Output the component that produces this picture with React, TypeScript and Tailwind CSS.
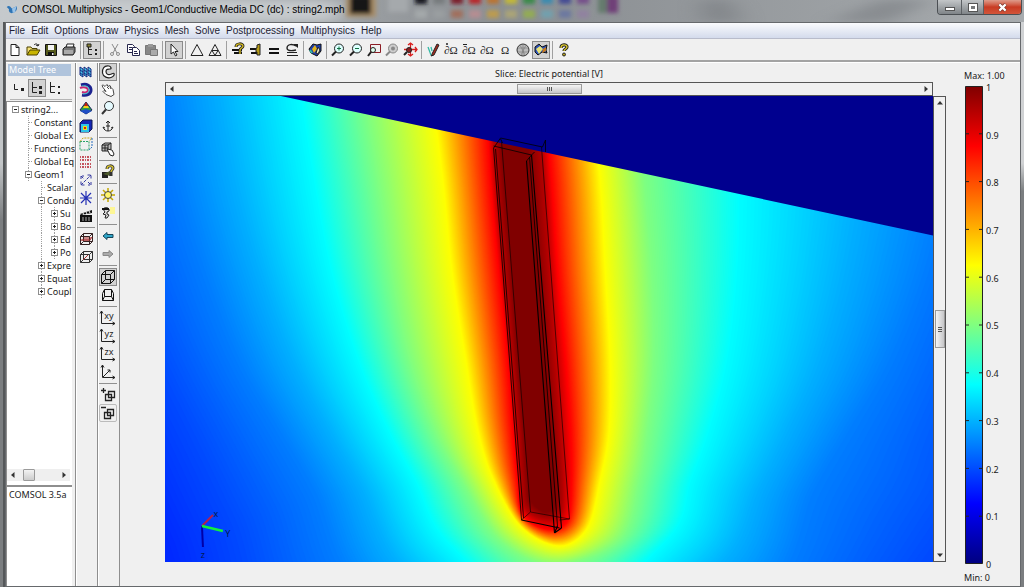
import React, { useState } from 'react';

type Point = [number, number];

const icons: Record<string, React.ReactNode> = {
  new: <path d="M4 2.500h5l3 3v8H4zM9 2.500v3h3" fill="#fff" stroke="#222" />,
  open: (
    <>
      <path d="M2 13V5h4l1 1.500h5V9" fill="#f6e27a" stroke="#4a4100" />
      <path d="M2 13l3-5h10l-3 5z" fill="#c8b400" stroke="#4a4100" />
      <path d="M9 3c2-2 4-1 4 1m-2-1l2 1 1-2" fill="none" stroke="#222" />
    </>
  ),
  save: (
    <>
      <path d="M2.500 2.500h11v11h-11z" fill="#555a1c" stroke="#111" />
      <path d="M5 3h6v5H5z" fill="#f4f4f4" />
      <path d="M5 10h6v3.500H5z" fill="#111" />
      <path d="M9 11h1.500v2H9z" fill="#eee" />
    </>
  ),
  print: (
    <>
      <path d="M5 6l1-4h7l-1 4" fill="#fff" stroke="#222" />
      <path d="M2 7l2-2h10v5l-2 3H2z" fill="#777" stroke="#222" />
      <path d="M3 9h9M3 11h9" stroke="#ddd" />
    </>
  ),
  tree: (
    <>
      <path d="M4.500 3v9.500M4.500 7.500H8M4.500 12.500H8" fill="none" stroke="#222" />
      <path d="M3 2h4v3H3z" fill="#8a8430" stroke="#222" />
      <path d="M11 7h2v2h-2zM11 11h2v2h-2z" fill="#222" />
    </>
  ),
  cut: (
    <g fill="none" stroke="#8b8b8b">
      <path d="M5 2l5 9M11 2L6 11" />
      <circle cx="5" cy="12" r="1.500" />
      <circle cx="11" cy="12" r="1.500" />
    </g>
  ),
  copy: (
    <g fill="#fff" stroke="#26264d">
      <path d="M2.500 2.500h5l2 2v6h-7z" />
      <path d="M7.500 5.500h4l3 3v5h-7z" />
      <path d="M4 5.500h3M4 7.500h3M9 9.500h3M9 11.500h4" />
    </g>
  ),
  paste: (
    <>
      <path d="M2.500 3.500h10v9h-10z" fill="#888" stroke="#777" />
      <path d="M5 2h5v3H5z" fill="#999" />
      <path d="M7.500 7.500h7v6h-7z" fill="#aaa" stroke="#777" />
    </>
  ),
  pointer: <path d="M5 2v10l2.500-2 2 4 1.500-1-2-3.500h3z" fill="#fff" stroke="#222" />,
  mesh: <path d="M8 2.500L14 13.500H2z" fill="none" stroke="#222" />,
  refine: <path d="M8 2.500L14 13.500H2zM5 8.500h6l-3 5z" fill="none" stroke="#222" />,
  solveParams: (
    <>
      <path d="M2 8h10M4 11h8" stroke="#111" strokeWidth="2" />
      <path d="M6 5c0-4 7-4 7-1 0 2-3 2-3 4v4" fill="none" stroke="#222" strokeWidth="3" />
      <path d="M6 5c0-4 7-4 7-1 0 2-3 2-3 4v4" fill="none" stroke="#d8bd1e" strokeWidth="1.300" />
    </>
  ),
  solveManager: (
    <>
      <path d="M2 7h9M3 11h9" stroke="#111" strokeWidth="2" />
      <path d="M9 3l3-1v11H9v-3H8V6h1z" fill="#b59b17" stroke="#222" />
    </>
  ),
  solve: <path d="M3 7h10M3 11h10" stroke="#111" strokeWidth="2" />,
  restart: (
    <>
      <path d="M12 4c-5-3-9-1-9 2s4 3 9 2" fill="none" stroke="#222" strokeWidth="1.300" />
      <path d="M9 2h5v4zM3 10h10v1H3zM3 13h11v1H3z" fill="#222" />
    </>
  ),
  palette: (
    <>
      <path d="M2 7l4-5 4 1 4-1v7l-4 5-6-3z" fill="#1f3ea8" stroke="#111" />
      <path d="M5 7l3-4 2 4-3 4z" fill="#e3b51a" />
      <path d="M9 11l2-6 2 3-2 4z" fill="#e9e9c8" stroke="#222" />
      <path d="M3 8l2 3" stroke="#33b8a3" strokeWidth="2" />
    </>
  ),
  zoomIn: (
    <>
      <circle cx="9" cy="6.500" r="4.500" fill="#dff" stroke="#222" />
      <path d="M7 6.500h4M9 4.500v4" stroke="#107040" />
      <path d="M6 9.500L2 13.500" stroke="#222" strokeWidth="2" />
    </>
  ),
  zoomOut: (
    <>
      <circle cx="9" cy="6.500" r="4.500" fill="#dff" stroke="#222" />
      <path d="M7 6.500h4" stroke="#107040" />
      <path d="M6 9.500L2 13.500" stroke="#222" strokeWidth="2" />
    </>
  ),
  zoomWindow: (
    <>
      <path d="M4.500 2.500h10v8h-10z" fill="none" stroke="#8c1d24" />
      <circle cx="7" cy="8" r="2.500" fill="#dfe" stroke="#222" />
      <path d="M5 10l-3 4" stroke="#222" strokeWidth="2" />
    </>
  ),
  zoomSelected: (
    <>
      <circle cx="9" cy="6.500" r="4.500" fill="#ccc" stroke="#888" />
      <circle cx="9" cy="6.500" r="2" fill="#888" />
      <path d="M6 9.500L2 13.500" stroke="#888" strokeWidth="2" />
    </>
  ),
  zoomExtents: (
    <>
      <path d="M8.500 1v13M2 7.500h13M6 3l2.500-2L11 3M13 5l2 2.500-2 2.500M6 12l2.500 2 2.500-2" fill="none" stroke="#d81c1c" strokeWidth="1.300" />
      <circle cx="7" cy="8" r="2.500" fill="#822" stroke="#222" />
      <path d="M5 10l-3 3" stroke="#222" strokeWidth="2" />
    </>
  ),
  drawMode: (
    <>
      <path d="M7 12L12 2l2 1-5 10-3 1z" fill="#a82a1c" stroke="#222" />
      <path d="M3 5l3 8M6 5l1 4" stroke="#35b9a5" strokeWidth="1.300" />
    </>
  ),
  sphere: (
    <>
      <circle cx="8" cy="8" r="6" fill="#bbb" stroke="#333" />
      <path d="M3 6h10M3 10h10M5 3l5 10M11 3L6 13M8 2v12" stroke="#777" strokeWidth=".6" />
    </>
  ),
  post: (
    <>
      <path d="M2 5l4-3 3 3 5-2-1 5 1 3-5-1-4 3-3-3z" fill="#2d54bd" stroke="#111" />
      <path d="M3 7l4-3 3 3-4 5z" fill="#e7e37a" />
      <path d="M9 11l1-4 3-2v4z" fill="#c7791e" />
    </>
  ),
  help: (
    <>
      <path d="M5 6c0-4 6-4 6-1 0 2-3 2-3 4" fill="none" stroke="#222" strokeWidth="3.200" />
      <path d="M5 6c0-4 6-4 6-1 0 2-3 2-3 4" fill="none" stroke="#d9c52c" strokeWidth="1.400" />
      <circle cx="8" cy="12.500" r="1.500" fill="#b39d17" stroke="#222" />
    </>
  ),
  slice: (
    <g stroke="#14277f" fill="#48c9e8">
      <path d="M2 3l3 2v8l-3-2zM6 3l3 2v8l-3-2zM10 3l3 2v8l-3-2z" />
      <path d="M2 6l3 2M6 6l3 2M10 6l3 2M2 9l3 2M6 9l3 2M10 9l3 2" />
    </g>
  ),
  isosurface: (
    <g fill="none">
      <path d="M3 3c6-2 10 1 10 5s-4 6-9 5" stroke="#1c2390" strokeWidth="3" />
      <path d="M2 6c4-2 8 0 8 2s-3 3-6 2" stroke="#c72873" strokeWidth="2" />
      <path d="M4 4c4-1 7 1 7 4s-3 4-6 4" stroke="#2fc5d0" />
    </g>
  ),
  subdomain: (
    <>
      <path d="M8 2l6 8-6 4-6-4z" fill="#2ba046" stroke="#1b2160" />
      <path d="M8 2l2 4H6z" fill="#c9190f" />
      <path d="M6 6h4l1 2H5z" fill="#f0cf19" />
      <path d="M2 11l6 3 6-3-6-2z" fill="#214fc7" />
    </>
  ),
  boundary: (
    <>
      <path d="M2 5l3-3h9v9l-3 3H2z" fill="#1526b5" stroke="#101650" />
      <path d="M3 6h8v8H3z" fill="#2fc4ea" />
      <path d="M5 8h4v4H5z" fill="#e2df22" />
      <path d="M6 9h2v2H6z" fill="#d4200f" />
    </>
  ),
  edge: (
    <g fill="none" strokeDasharray="2 1">
      <path d="M2 5.500h9v8.500H2z" stroke="#2aa36a" />
      <path d="M2 5.500L5 2h9l-3 3.500" stroke="#c9a51c" />
      <path d="M14 2v9l-3 3" stroke="#2a6fbf" />
    </g>
  ),
  arrows: (
    <path
      d="M2 3h12M2 6h12M2 10h12M2 13h12"
      fill="none"
      stroke="#b5202e"
      strokeWidth="1.500"
      strokeDasharray="1 1 2 1"
    />
  ),
  principal: (
    <path
      d="M3 13L13 3M9.500 3H13v3.500M3 9.500V13h3.500M3 4l3 3M10 10l3 3M13 10v3h-3M3 7V4h3"
      fill="none"
      stroke="#3438a0"
      strokeDasharray="3 1"
    />
  ),
  streamline: <path d="M8 1v14M2 8h12M3 3l10 10M13 3L3 13" stroke="#2430b4" strokeWidth="1.200" />,
  animate: (
    <>
      <path d="M2 7h12v7H2z" fill="#111" />
      <path d="M2 6l12-4v3L3 7z" fill="#111" />
      <path d="M5 5l1 2M8 4l1 2M11 3l1 2" stroke="#eee" />
      <path d="M4 10h8M4 12h8" stroke="#aaa" strokeDasharray="2 1" />
    </>
  ),
  geomRed: (
    <>
      <path d="M3 10l3-4h8l-2 4z" fill="#c88" />
      <path d="M2.500 5.500h9v8h-9zM2.500 5.500l3-3h9v8l-3 3M11.500 5.500l3-3M5.500 2.500v8h9M5.500 10.500l-3 3" fill="none" stroke="#342020" />
      <path d="M3 9h9l2-3" fill="none" stroke="#a33" />
    </>
  ),
  geomCut: (
    <>
      <path d="M2.500 5.500h9v8h-9zM2.500 5.500l3-3h9v8l-3 3M11.500 5.500l3-3M5.500 2.500v8h9M5.500 10.500l-3 3" fill="none" stroke="#333" />
      <path d="M5 11l5-5" stroke="#a33" />
    </>
  ),
  orbit: (
    <path
      d="M9 2C4 1 2 5 2.500 9S8 14.500 11 13.500s3.500-3 3-4-2 .5-4 1-4-.5-4-3S8 5 10 5s1-2.500-1-3z"
      fill="#fff"
      stroke="#222"
      strokeWidth="1.200"
    />
  ),
  pan: (
    <path
      d="M2 3.500c1-1 2 0 3 1l2-2 1 2 2-1 1 2 2 2 1 5-3 2-5-2-3-3 1-1 2 1-3-4zM7 5l2 2M10 5l1 2"
      fill="#fff"
      stroke="#333"
      strokeWidth=".9"
    />
  ),
  dolly: (
    <>
      <circle cx="9" cy="6" r="4.500" fill="#e6fbff" stroke="#333" />
      <path d="M6 9.500l-4 4.500" stroke="#333" strokeWidth="2" />
    </>
  ),
  anchor: (
    <path d="M8 3v10M6 5l2-2 2 2M6 8h4M3 9c1 3 3 4 5 4s4-1 5-4l-2 1M3 9l2 1" fill="none" stroke="#222" />
  ),
  cubeHand: (
    <>
      <path d="M2 4l3-2h6v6l-3 2H2zM2 4h6v6M8 4l3-2M5 4v6M2 7h6" fill="#bbb" stroke="#222" />
      <path d="M7 8l5 1 2 4-1 2-3-1z" fill="#fff" stroke="#222" />
    </>
  ),
  cameraHelp: (
    <>
      <path d="M2 8h6v6H2z" fill="#222" />
      <path d="M3 10l7-3v5z" fill="#4d5a2c" />
      <path d="M7 5c0-4 6-4 6-1 0 2-2 2-2 4v4" fill="none" stroke="#333" strokeWidth="3" />
      <path d="M7 5c0-4 6-4 6-1 0 2-2 2-2 4" fill="none" stroke="#d9c52c" strokeWidth="1.300" />
    </>
  ),
  light: (
    <>
      <path d="M8 1v14M1 8h14M3 3l10 10M13 3L3 13" stroke="#c4a900" strokeWidth="1.500" />
      <circle cx="8" cy="8" r="3.500" fill="#fff56a" stroke="#444" />
    </>
  ),
  headlight: (
    <>
      <path d="M10 2h5v7h-5z" fill="#fdf695" />
      <path d="M3 4c3-3 7-1 6 2l-2 1v2l2 1-2 3H5l1-3-3-1 2-2z" fill="#ddd" stroke="#222" />
      <path d="M2 4h7" stroke="#111" strokeWidth="2" />
    </>
  ),
  back: <path d="M3 8l4-3.500V6.500h6v3H7v2z" fill="#2fa6c9" stroke="#174558" />,
  forward: <path d="M13 8L9 4.500V6.500H3v3h6v2z" fill="#aaa" stroke="#888" />,
  cube: (
    <path d="M1.500 5.500h9v9h-9zM1.500 5.500l4-4h9v9l-4 4M10.500 5.500l4-4M5.500 1.500v9h9M5.500 10.500l-4 4" fill="none" stroke="#111" />
  ),
  perspective: (
    <path d="M4.500 2.500h7v7h-7zM4.500 9.500l-2 4h11l-2-4M2.500 13.500v-7l2-4M13.500 13.500v-7l-2-4" fill="none" stroke="#111" />
  ),
  isoView: <path d="M2.500 1v12.500H15M1 3.500L2.500 1 4 3.500M12.500 12l2.500 1.500-2.500 1.500M3 13l7-7M7.500 6H10v2.500" fill="none" stroke="#222" />,
  addCopy: <path d="M1 3.500h5M3.500 1v5M5.500 7.500h6v6h-6zM8.500 4.500h6v6h-6z" fill="none" stroke="#222" strokeWidth="1.300" />,
  subCopy: <path d="M1 2.500h5M4.500 7.500h6v6h-6zM7.500 4.500h6v6h-6z" fill="none" stroke="#222" strokeWidth="1.300" />,
  levelOne: (
    <>
      <path d="M3.500 4v5.500H7" fill="none" stroke="#222" />
      <path d="M10 8h3v3h-3z" fill="#222" />
    </>
  ),
  levelTwo: (
    <>
      <path d="M3.500 2v10.500H8M3.500 7.500H8" fill="none" stroke="#222" />
      <path d="M10 6h3v3h-3zM10 11h3v3h-3z" fill="#222" />
    </>
  ),
  levelAll: (
    <>
      <path d="M3.500 2v10.500H8M3.500 6.500H8" fill="none" stroke="#222" />
      <path d="M11 6h2v2h-2zM11 12h2v2h-2z" fill="#222" />
    </>
  ),
};

const textIcon = (text: string) => (
  <text x="8" y="12" fontSize="11" textAnchor="middle" fill="#222" fontFamily="Liberation Serif, serif">
    {text}
  </text>
);

icons.pointMode = (
  <>
    {textIcon('∂Ω')}
    <circle cx="4" cy="2" r="1" fill="#222" />
  </>
);
icons.edgeMode = (
  <>
    {textIcon('∂Ω')}
    <path d="M2 2.500h4" stroke="#222" />
  </>
);
icons.boundaryMode = textIcon('∂Ω');
icons.subdomainMode = textIcon('Ω');

const planeIcon = (label: string) => (
  <>
    <path d="M1.500 1v12.500H15M0 3.500L1.500 1 3 3.500M12.500 12l2.500 1.500-2.500 1.500" fill="none" stroke="#222" />
    <text x="9" y="9" fontSize="9" textAnchor="middle" fill="#222" fontFamily="Noto Sans, sans-serif">
      {label}
    </text>
  </>
);

icons.xy = planeIcon('xy');
icons.yz = planeIcon('yz');
icons.zx = planeIcon('zx');

const menus = ['File', 'Edit', 'Options', 'Draw', 'Physics', 'Mesh', 'Solve', 'Postprocessing', 'Multiphysics', 'Help'];

const mainTools = [
  ['new', 'open', 'save', 'print'],
  ['tree'],
  ['cut', 'copy', 'paste'],
  ['pointer'],
  ['mesh', 'refine'],
  ['solveParams', 'solveManager', 'solve', 'restart'],
  ['palette'],
  ['zoomIn', 'zoomOut', 'zoomWindow', 'zoomSelected', 'zoomExtents'],
  ['drawMode', 'pointMode', 'edgeMode', 'boundaryMode', 'subdomainMode', 'sphere', 'post'],
  ['help'],
];

const plotTools = [
  ['slice', 'isosurface', 'subdomain', 'boundary', 'edge', 'arrows', 'principal', 'streamline', 'animate'],
  ['geomRed', 'geomCut'],
];

const cameraTools = [
  ['orbit', 'pan', 'dolly', 'anchor'],
  ['cubeHand'],
  ['cameraHelp'],
  ['light', 'headlight'],
  ['back', 'forward'],
  ['cube', 'perspective'],
  ['xy', 'yz', 'zx', 'isoView'],
  ['addCopy', 'subCopy'],
];

const pressed = ['tree', 'pointer', 'post', 'orbit', 'cube', 'levelTwo'];

const treeRows = [
  { level: 0, label: 'string2...', box: '-' },
  { level: 1, label: 'Constant', box: '' },
  { level: 1, label: 'Global Ex', box: '' },
  { level: 1, label: 'Functions', box: '' },
  { level: 1, label: 'Global Eq', box: '' },
  { level: 1, label: 'Geom1', box: '-' },
  { level: 2, label: 'Scalar', box: '' },
  { level: 2, label: 'Condu', box: '-' },
  { level: 3, label: 'Su', box: '+' },
  { level: 3, label: 'Bo', box: '+' },
  { level: 3, label: 'Ed', box: '+' },
  { level: 3, label: 'Po', box: '+' },
  { level: 2, label: 'Expre', box: '+' },
  { level: 2, label: 'Equat', box: '+' },
  { level: 2, label: 'Coupl', box: '+' },
];

// equipotential curves, from the outside in, all with the same stations
const contours: { v: number; points: Point[] }[] = [
  {
    v: 0.16,
    points: [[-60, 80], [0, 180], [30, 270], [70, 360], [110, 450], [150, 540], [230, 700], [555, 850], [900, 700], [1100, 540], [1120, 450], [1130, 360], [1150, 270], [1180, 180], [1200, 80]],
  },
  {
    v: 0.2,
    points: [[47, 80], [90, 180], [120, 270], [158, 360], [198, 441], [235, 518], [300, 655], [555, 780], [830, 650], [953, 518], [980, 441], [1003, 360], [1030, 270], [1055, 180], [1068, 80]],
  },
  {
    v: 0.25,
    points: [[158, 80], [178, 180], [205, 270], [240, 360], [280, 430], [315, 490], [370, 600], [555, 700], [760, 600], [815, 490], [850, 430], [890, 360], [925, 270], [945, 180], [950, 80]],
  },
  {
    v: 0.3,
    points: [[220, 80], [238, 180], [262, 270], [295, 360], [331, 430], [363, 486], [412, 575], [555, 662], [713, 570], [758, 486], [786, 430], [817, 360], [842, 270], [856, 180], [858, 80]],
  },
  {
    v: 0.375,
    points: [[298, 80], [314, 180], [331, 270], [358, 360], [388, 430], [415, 480], [450, 545], [555, 620], [668, 540], [692, 480], [710, 430], [728, 360], [738, 270], [740, 180], [735, 80]],
  },
  {
    v: 0.5,
    points: [[362, 80], [378, 180], [391, 270], [410, 360], [435, 430], [462, 480], [500, 540], [555, 565], [620, 540], [640, 480], [648, 430], [654, 360], [652, 270], [645, 180], [638, 80]],
  },
  {
    v: 0.625,
    points: [[430, 80], [443, 180], [452, 270], [466, 360], [478, 430], [494, 480], [522, 527], [560, 546], [588, 528], [601, 480], [610, 430], [611, 360], [606, 270], [601, 180], [590, 80]],
  },
  {
    v: 0.875,
    points: [[486, 80], [491, 180], [499, 270], [508, 360], [513, 430], [518, 480], [523, 514], [548, 529], [568, 520], [572, 480], [571, 430], [566, 360], [558, 270], [552, 180], [544, 80]],
  },
  {
    v: 0.95,
    points: [[491, 80], [497, 180], [505, 270], [513, 360], [519, 430], [522, 480], [526, 508], [546, 519], [561, 512], [563, 480], [560, 430], [555, 360], [549, 270], [544, 180], [537, 80]],
  },
  {
    v: 1,
    points: [[498, 80], [505, 180], [513, 270], [519, 360], [525, 430], [529, 480], [531, 500], [545, 512], [555, 505], [555, 480], [551, 430], [545, 360], [538, 270], [531, 180], [523, 80]],
  },
];

const clamp = (n: number) => Math.max(0, Math.min(1, n));

const jet = (v: number) => {
  const r = v > 0.875 ? 1 - (v - 0.875) * 4 : (v - 0.375) * 4;
  const g = v > 0.5 ? (0.875 - v) * 4 : (v - 0.125) * 4;
  const b = v < 0.125 ? 0.5 + v * 4 : (0.625 - v) * 4;
  return `rgb(${[r, g, b].map((c) => Math.round(clamp(c) * 255)).join(',')})`;
};

const contourAt = (v: number): Point[] => {
  const i = Math.max(1, contours.findIndex((c) => c.v >= v));
  const a = contours[i - 1];
  const b = contours[i];
  const t = (v - a.v) / (b.v - a.v);
  return a.points.map(([x, y], k) => [x + (b.points[k][0] - x) * t, y + (b.points[k][1] - y) * t]);
};

const smoothPath = (p: Point[]) => {
  let d = `M${p[0][0]} ${p[0][1]}`;
  for (let i = 0; i < p.length - 1; i++) {
    const before = p[Math.max(0, i - 1)];
    const after = p[Math.min(p.length - 1, i + 2)];
    const c1 = [p[i][0] + (p[i + 1][0] - before[0]) / 6, p[i][1] + (p[i + 1][1] - before[1]) / 6];
    const c2 = [p[i + 1][0] - (after[0] - p[i][0]) / 6, p[i + 1][1] - (after[1] - p[i][1]) / 6];
    d += `C${c1.map((n) => n.toFixed(1))} ${c2.map((n) => n.toFixed(1))} ${p[i + 1].map((n) => n.toFixed(1))}`;
  }
  return d + 'Z';
};

const levels = Array.from({ length: 335 }, (_, i) => 0.165 + i * 0.0025);

const ToolButton = ({ name }: { name: string }) => (
  <button
    aria-label={name}
    className={`w-[18px] h-[18px] shrink-0 flex items-center justify-center ${
      pressed.includes(name)
        ? 'bg-[#d2d2d2] border border-[#8a8a8a]'
        : name === 'subCopy'
        ? 'border border-[#bbbbbb] rounded-[2px]'
        : ''
    }`}
  >
    <svg viewBox="0 0 16 16" className="w-4 h-4 shrink-0 overflow-visible">
      {icons[name]}
    </svg>
  </button>
);

const SideBar = ({ groups }: { groups: string[][] }) => (
  <div className="w-[22px] shrink-0 flex flex-col items-center pr-[2px] border-l border-[#8e8e8e] shadow-[inset_1px_0_0_#ffffff]">
    {groups.map((group, i) => (
      <React.Fragment key={i}>
        {i > 0 && <div className="w-[18px] h-px my-[2px] bg-[#909090]" />}
        {group.map((name) => (
          <ToolButton key={name} name={name} />
        ))}
      </React.Fragment>
    ))}
  </div>
);

const Arrow = ({ d, label }: { d: string; label: string }) => (
  <button aria-label={label} className="w-3 h-3 shrink-0 flex items-center justify-center">
    <svg viewBox="0 0 6 6" className="w-[6px] h-[6px]">
      <path d={d} fill="#333" />
    </svg>
  </button>
);

const LEFT = 'M4.500 0v6L1 3z';
const RIGHT = 'M1.500 0v6L5 3z';
const UP = 'M0 4.500h6L3 1z';
const DOWN = 'M0 1.500h6L3 5z';

const TitleBar = () => (
  <header className="relative h-[22px] shrink-0 flex items-start justify-between overflow-hidden bg-linear-to-r from-[#c4c8cb] via-[#898d91] to-[#a7abae]">
    <svg className="absolute inset-0 h-[22px] w-full" viewBox="0 0 1024 22" preserveAspectRatio="xMinYMin slice">
      <defs>
        <filter id="glass">
          <feGaussianBlur stdDeviation="2" />
        </filter>
        <filter id="glow" x="-10%" width="120%" y="-50%" height="200%">
          <feGaussianBlur stdDeviation="12 4" />
        </filter>
      </defs>
      <path d="M0 0h340v22H0z" fill="#c6cacd" filter="url(#glow)" />
      <path d="M700 0h30l12 22h-40zM880 0h50l-40 22h-60z" fill="#73777b" opacity=".5" filter="url(#glow)" />
      <g filter="url(#glass)">
        <path d="M346 -4h30v21h-30z" fill="#a88d68" />
        <path d="M350 -4h21v18h-21z" fill="#191715" />
        <path d="M388 -4h20v16h-20z" fill="#a5a9ac" />
        {['#16181a', '#777b7e', '#7b1d2c', '#b8252c', '#ba7431', '#c2b839', '#3b8a4a', '#3c8bb0', '#454c94', '#76508a'].map((c, i) => (
          <rect key={c} x={415 + i * 18} y="-6" width="12" height="10" fill={c} />
        ))}
        {['#a4a9aa', '#9a9ea0', '#a1705d', '#b58d92', '#bd9b4d', '#aaa477', '#93ac52', '#72a0ae', '#6c78a0', '#9182a0'].map((c, i) => (
          <rect key={c} x={415 + i * 18} y="10" width="12" height="8" fill={c} />
        ))}
        <path d="M598 -4h10v17h-10z" fill="#657c6d" />
        <path d="M607 -4h11v17h-11z" fill="#704078" />
      </g>
    </svg>
    <div className="relative flex items-center gap-1 pl-1.5 h-5">
      <svg viewBox="0 0 16 16" className="w-3 h-3">
        <path d="M1 4c3-3 5 0 7 2l6-3c2 4-1 8-5 9-3 1-6-2-5-5z" fill="#2e74b5" />
        <path d="M8 6l6-3-2 8-3 1z" fill="#9cc4e8" />
      </svg>
      <h1 className="text-[10px] leading-4 text-black whitespace-nowrap font-['Liberation_Sans',sans-serif]">
        COMSOL Multiphysics - Geom1/Conductive Media DC (dc) : string2.mph
      </h1>
    </div>
    <div className="relative flex h-[15px] mr-[2px] rounded-b border border-t-0 border-[#4b4f53] overflow-hidden">
      <button aria-label="Minimize" className="w-6 flex items-center justify-center bg-linear-to-b from-[#c3c6c8] to-[#7f8488] border-r border-[#5c6064]">
        <span className="w-[10px] h-1 mt-1 bg-white border border-[#555555]" />
      </button>
      <button aria-label="Maximize" className="w-[22px] flex items-center justify-center bg-linear-to-b from-[#c3c6c8] to-[#7f8488] border-r border-[#5c6064]">
        <span className="w-2 h-[7px] bg-[#77797b] border-2 border-white outline outline-[#555555]" />
      </button>
      <button aria-label="Close" className="w-[37px] flex items-center justify-center bg-linear-to-b from-[#dd9b8b] via-[#c83a22] to-[#d2553a]">
        <svg viewBox="0 0 10 10" className="w-[9px] h-[9px]">
          <path d="M1.500 1.500l7 7M8.500 1.500l-7 7" stroke="#6b2a20" strokeWidth="4" />
          <path d="M1.500 1.500l7 7M8.500 1.500l-7 7" stroke="#fff" strokeWidth="2.500" />
        </svg>
      </button>
    </div>
  </header>
);

const ModelTree = () => {
  const [selected, setSelected] = useState('');
  return (
    <aside className="w-[69px] shrink-0 flex flex-col bg-[#f0f0f0] pr-[3px] text-[9px]">
      <h2 className="mt-px ml-[2px] h-3 pl-px mr-px bg-[#b0c4dc] text-white text-[9px] leading-3 whitespace-nowrap">
        Model Tree
      </h2>
      <div className="flex items-center h-6 ml-1 border-b border-[#b5b5b5]">
        <ToolButton name="levelOne" />
        <ToolButton name="levelTwo" />
        <ToolButton name="levelAll" />
      </div>
      <div className="mt-px flex-1 min-h-0 flex flex-col bg-white border-t border-l border-[#8e8e8e]">
        <ul className="flex-1 min-h-0 pt-px pl-[5px]">
          {treeRows.map((row) => (
            <li key={row.label} className="flex h-[13px]">
              {Array.from({ length: row.level }, (_, i) => (
                <span key={i} className="w-[13px] shrink-0 flex justify-center pr-[6px]">
                  {row.level === 3 && i === 2 && <span className="border-l border-dotted border-[#a0a0a0]" />}
                </span>
              ))}
              <span className="w-[7px] shrink-0">
                <svg viewBox="0 0 7 13" className="w-[7px] h-[13px]" fill="none" shapeRendering="crispEdges">
                  {row.level > 0 && <path d="M3.500 0v13" stroke="#a0a0a0" strokeDasharray="1 1" />}
                  {row.box ? (
                    <>
                      <path d="M.5 3.500h6v6h-6z" fill="#fff" stroke="#8e8e8e" />
                      <path d={row.box === '+' ? 'M2 6.500h3M3.500 5v3' : 'M2 6.500h3'} stroke="#222" />
                    </>
                  ) : (
                    <path d="M3.500 6.500H7" stroke="#a0a0a0" strokeDasharray="1 1" />
                  )}
                </svg>
              </span>
              <button
                onClick={() => setSelected(row.label)}
                className={`pl-[2px] leading-[13px] whitespace-nowrap text-left ${
                  selected === row.label ? 'bg-[#cfe0f5]' : ''
                }`}
              >
                {row.label}
              </button>
            </li>
          ))}
        </ul>
        <div className="flex items-center justify-between h-3 mb-1 mr-[2px] bg-[#efefef]">
          <Arrow d={LEFT} label="Scroll tree left" />
          <div className="flex-1 flex items-center pl-1">
            <div className="w-3 h-3 border border-[#9a9a9a] rounded-[1px] bg-linear-to-b from-[#f3f3f3] to-[#cccccc]" />
          </div>
          <Arrow d={RIGHT} label="Scroll tree right" />
        </div>
      </div>
      <div className="h-[101px] shrink-0 pl-[2px] border-t-2 border-l border-[#8e8e8e] bg-white">
        <p className="leading-[15px] whitespace-nowrap">COMSOL 3.5a</p>
      </div>
    </aside>
  );
};

const SlicePlot = () => (
  <svg
    viewBox="165 96 769 466"
    preserveAspectRatio="none"
    className="absolute inset-0 w-full h-full"
    role="img"
    aria-label="Slice plot of the electric potential"
  >
    <path d="M165 96h769v466H165z" fill={jet(0.165)} />
    {levels.map((v) => (
      <path key={v} d={smoothPath(contourAt(Math.min(v, 1)))} fill={jet(Math.min(v, 1))} />
    ))}
    <path d="M281 96L934 235.500V96z" fill="#00008f" />
    <g fill="none" stroke="#000" strokeWidth=".8">
      <path d="M494 148L501 138L543 147L546 140V152M501 139L503 143M494 146L532 155L527 161M532 155L535 152" />
      <path d="M494 148L522 520M496 149L524 518" />
      <path d="M502 142L531 512M542 147L570 519" strokeWidth=".6" />
      <path d="M527 161L555 533M532 155L562 528" strokeWidth="1.100" />
      <path d="M530 157L558 526" />
      <path d="M522 520L560 528M555 533L562 528M555 533L558 526" strokeWidth="1.200" />
      <path d="M522 520L531 512L570 519L560 520" strokeWidth=".6" />
    </g>
    <g fill="none" strokeWidth="2">
      <path d="M202 526L213 515" stroke="#b3204e" />
      <path d="M202 526L203 547" stroke="#0000a8" />
      <path d="M202 526L223 531" stroke="#12f03c" strokeWidth="2.500" />
    </g>
    <g fontSize="9" fill="#001a55" textAnchor="middle" fontFamily="Noto Sans, sans-serif">
      <text x="216" y="517">x</text>
      <text x="228" y="537">Y</text>
      <text x="203" y="558">z</text>
    </g>
  </svg>
);

const ticks = ['1', '0.9', '0.8', '0.7', '0.6', '0.5', '0.4', '0.3', '0.2', '0.1', '0'];

const ColorBar = () => (
  <div className="w-14 shrink-0 flex flex-col pt-2 text-[9px]">
    <p className="h-[15px] leading-[10px] whitespace-nowrap">Max: 1.00</p>
    <div className="flex-1 min-h-0 flex gap-[3px]">
      <svg viewBox="0 0 18 478" preserveAspectRatio="none" className="w-[18px] h-full ml-px">
        <defs>
          <linearGradient id="jet" x1="0" y1="0" x2="0" y2="1">
            {[1, 0.875, 0.625, 0.5, 0.375, 0.125, 0].map((v) => (
              <stop key={v} offset={1 - v} stopColor={jet(v)} />
            ))}
          </linearGradient>
        </defs>
        <path d="M.5 .5h17v477H.5z" fill="url(#jet)" stroke="#222" />
        {ticks.slice(1, -1).map((t, i) => (
          <path key={t} d={`M1 ${(i + 1) * 47.8}h3M14 ${(i + 1) * 47.8}h3`} stroke="#222" />
        ))}
      </svg>
      <ol className="flex flex-col justify-between -mt-[3px] -mb-[6px] leading-[10px]">
        {ticks.map((t) => (
          <li key={t}>{t}</li>
        ))}
      </ol>
    </div>
    <p className="h-[22px] pt-[9px] leading-[10px]">Min: 0</p>
  </div>
);

const App = () => {
  return (
    <div className="h-screen w-full flex flex-col overflow-hidden bg-[#7f8386] text-[#1a1a1a] font-['Noto_Sans','Open_Sans',sans-serif]">
      <TitleBar />
      <div className="flex-1 min-h-0 flex">
        <div className="w-[5px] shrink-0 border-r-2 border-[#55585a] bg-linear-to-b from-[#c3c6c8] from-25% to-[#7b7e80] to-35%" />
        <div className="flex-1 min-w-0 flex flex-col bg-[#f0f0f0] border border-[#66696c]">
          <nav className="h-4 shrink-0 flex items-center gap-1.5 pl-[3px] bg-linear-to-b from-[#fafbfd] to-[#d4dbec] border-b border-[#b8bccb] font-['Liberation_Sans',sans-serif]">
            {menus.map((menu) => (
              <button key={menu} className="text-[10px] leading-[14px] text-[#1d1d33]">
                {menu}
              </button>
            ))}
          </nav>
          <div className="h-[23px] shrink-0 flex items-center border-b-2 border-[#a3a3a3]">
            {mainTools.map((group, i) => (
              <React.Fragment key={i}>
                {i > 0 && <div className="w-px h-[18px] mx-[2px] bg-[#a0a0a0]" />}
                {group.map((name) => (
                  <ToolButton key={name} name={name} />
                ))}
              </React.Fragment>
            ))}
          </div>
          <div className="flex-1 min-h-0 flex border-t border-white">
            <ModelTree />
            <SideBar groups={plotTools} />
            <SideBar groups={cameraTools} />
            <main className="flex-1 min-w-0 flex border-l border-[#8e8e8e] pl-[45px]">
              <section className="flex-1 min-w-0 flex flex-col pb-6">
                <h2 className="h-[19px] pt-1 pr-[13px] text-[9px] leading-[14px] text-center">Slice: Electric potential [V]</h2>
                <div className="h-[14px] shrink-0 mr-[13px] flex items-center border border-[#555555]">
                  <Arrow d={LEFT} label="Scroll left" />
                  <div className="flex-1 flex justify-center">
                    <div className="w-[65px] h-[10px] flex items-center justify-center gap-px border border-[#9a9a9a] bg-linear-to-b from-[#f5f5f5] to-[#c6c6c8]">
                      <span className="w-px h-1 bg-[#555555]" />
                      <span className="w-px h-1 bg-[#555555]" />
                      <span className="w-px h-1 bg-[#555555]" />
                    </div>
                  </div>
                  <Arrow d={RIGHT} label="Scroll right" />
                </div>
                <div className="flex-1 min-h-0 flex">
                  <div className="relative flex-1 min-w-0">
                    <SlicePlot />
                  </div>
                  <div className="w-[13px] shrink-0 flex flex-col items-center border border-[#555555]">
                    <Arrow d={UP} label="Scroll up" />
                    <div className="flex-1 flex items-center">
                      <div className="w-[10px] h-[38px] flex flex-col items-center justify-center gap-px border border-[#9a9a9a] bg-linear-to-r from-[#f5f5f5] to-[#c6c6c8]">
                        <span className="w-1 h-px bg-[#555555]" />
                        <span className="w-1 h-px bg-[#555555]" />
                        <span className="w-1 h-px bg-[#555555]" />
                      </div>
                    </div>
                    <Arrow d={DOWN} label="Scroll down" />
                  </div>
                </div>
              </section>
              <div className="w-[18px] shrink-0" />
              <ColorBar />
            </main>
          </div>
        </div>
        <div className="w-[3px] shrink-0 bg-linear-to-b from-[#d0d2d4] from-25% to-[#7b7e80] to-30%" />
      </div>
    </div>
  );
};

export default App;
